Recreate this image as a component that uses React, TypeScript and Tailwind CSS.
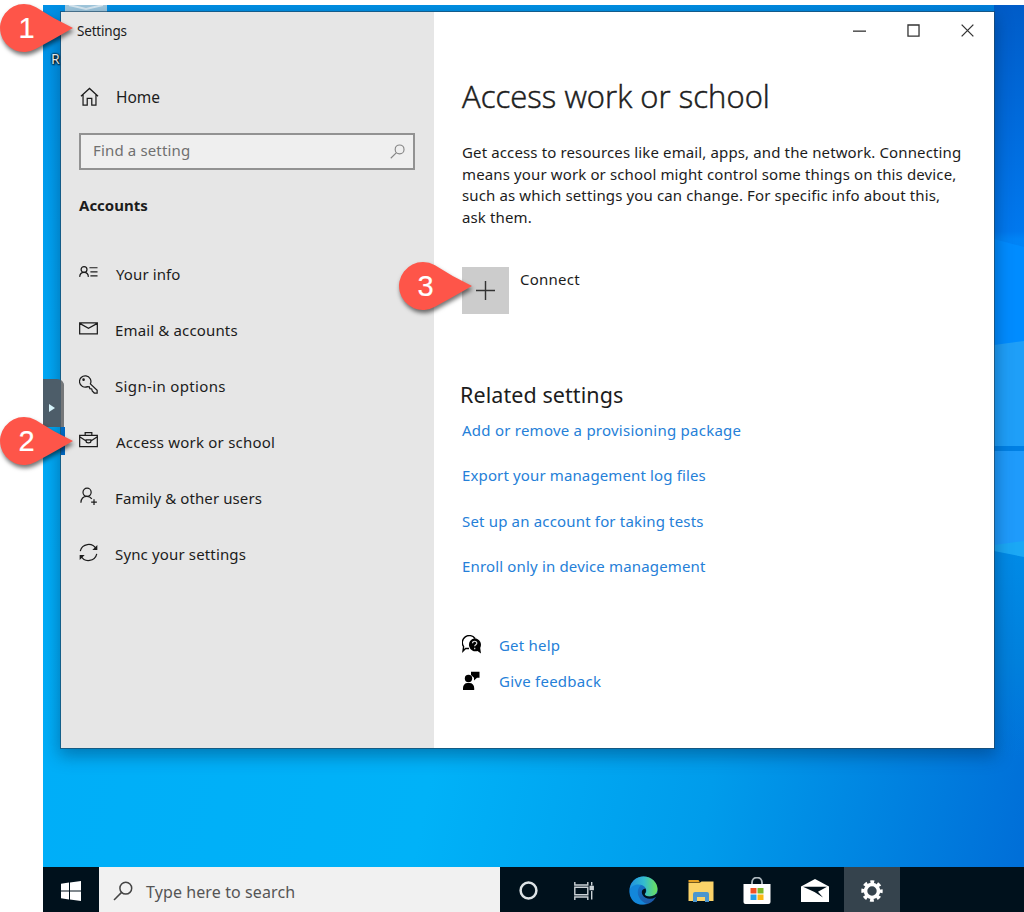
import type { ReactNode } from 'react'

function Line({ children, size = 20, width = 1.3, className = '' }: {
  children: ReactNode; size?: number; width?: number; className?: string
}) {
  return (
    <svg
      width={size} height={size} viewBox="0 0 20 20" fill="none" stroke="currentColor"
      strokeWidth={width} className={`shrink-0 ${className}`} aria-hidden="true"
    >
      {children}
    </svg>
  )
}

function SearchIcon({ size, className, width = 1.5 }: { size: number; className: string; width?: number }) {
  return (
    <Line size={size} className={className} width={width}>
      <circle cx="12.8" cy="7.2" r="5.9" />
      <path d="M8.6 11.4 1 19" />
    </Line>
  )
}

const navItems = [
  {
    label: 'Your info',
    track: 'tracking-[0.1px] pl-px',
    icon: (
      <>
        <circle cx="5.3" cy="6.8" r="3.1" />
        <path d="M.7 14.6c.2-3 2-4.7 4.6-4.7s4.4 1.7 4.6 4.7M11 5h8.5M12 9.3h7.5M12 13.6h7.5" />
      </>
    ),
  },
  {
    label: 'Email & accounts',
    track: 'tracking-[0.15px]',
    icon: (
      <path d="M.7 4h18.6v11.700H.7zM.7 4.6 10 9.7l9.3-5.1" />
    ),
  },
  {
    label: 'Sign-in options',
    track: 'tracking-[0.35px]',
    icon: (
      <>
        <path d="M12 9.300a6 6 0 1 0-3 3l1.900.2.5 1.900 2 .3.5 2 2.200 2.300h3v-2.900z" />
        <circle cx="4.800" cy="4.900" r=".7" fill="currentColor" />
      </>
    ),
  },
  {
    label: 'Access work or school',
    track: 'tracking-[0.22px] pl-px',
    active: true,
    icon: (
      <path d="M.7 4.500h18.600v12H.7zM6.500 4.500V1.700h7v2.800M.7 6l6.800 4.500M19.300 6l-6.800 4.500M7.500 9.300h5v1.500c0 1-1 1.700-2.500 1.700s-2.500-.7-2.500-1.700z" />
    ),
  },
  {
    label: 'Family & other users',
    track: 'tracking-[0.1px]',
    icon: (
      <>
        <circle cx="8.500" cy="5.600" r="4.300" />
        <path d="M2 16.500c.2-4 2.600-6.600 6.300-6.600 2.300 0 4 .9 5.200 2.500M15.800 13v6M12.800 16h6" />
      </>
    ),
  },
  {
    label: 'Sync your settings',
    track: 'tracking-[0.15px]',
    icon: (
      <>
        <path d="M1.300 8.500A9 9 0 0 1 18 6.300M18.700 11.500A9 9 0 0 1 2 13.700" />
        <path d="M19.300 2v5.300H14zM.7 18v-5.300H6z" fill="currentColor" stroke="none" />
      </>
    ),
  },
]

const links = [
  { label: 'Add or remove a provisioning package', track: 'tracking-[0.24px]' },
  { label: 'Export your management log files', track: 'tracking-[0.13px]' },
  { label: 'Set up an account for taking tests', track: 'tracking-[0.17px]' },
  { label: 'Enroll only in device management', track: 'tracking-[0.16px]' },
]

function Wallpaper() {
  return (
    <svg className="absolute inset-0" width="981" height="862" viewBox="43 5 981 862" preserveAspectRatio="none" aria-hidden="true">
      <defs>
        <linearGradient id="base" x1="43" y1="700" x2="1010" y2="900" gradientUnits="userSpaceOnUse">
          <stop offset="0" stopColor="#00aef8" />
          <stop offset=".4" stopColor="#00b2f8" />
          <stop offset=".68" stopColor="#009ceb" />
          <stop offset="1" stopColor="#006fd8" />
        </linearGradient>
        <linearGradient id="top" x1="0" y1="5" x2="0" y2="760" gradientUnits="userSpaceOnUse">
          <stop offset="0" stopColor="#0078d7" stopOpacity=".55" />
          <stop offset=".5" stopColor="#0090e8" stopOpacity=".2" />
          <stop offset="1" stopColor="#00a8f0" stopOpacity="0" />
        </linearGradient>
        <linearGradient id="side" x1="0" y1="5" x2="0" y2="760" gradientUnits="userSpaceOnUse">
          <stop offset="0" stopColor="#005cc8" />
          <stop offset=".3" stopColor="#0078ee" />
          <stop offset=".31" stopColor="#0083f6" />
          <stop offset=".43" stopColor="#0088fa" />
          <stop offset=".73" stopColor="#008ae6" />
          <stop offset=".87" stopColor="#0080dc" />
          <stop offset="1" stopColor="#0078dc" stopOpacity="0" />
        </linearGradient>
      </defs>
      <path fill="url(#base)" d="M43 5h981v862H43z" />
      <path fill="url(#top)" d="M43 5h981v755H43z" />
      <path fill="url(#side)" d="M994 5h30v755h-30z" />
      <path fill="#008cff" d="m994 239 30 8v96l-30 2z" />
      <path fill="#1f9ff8" d="m994 345 30-4v105h-30z" />
      <path fill="#0080e4" d="M994 446h30v5h-30z" />
      <path fill="#1f9bfb" d="M994 451h30v92l-30 3z" />
      <path fill="#1ba8f5" d="m994 545 30-4v16l-30-6z" />
    </svg>
  )
}

// Numbered teardrop pointing right
function Callout({ n, className }: { n: number; className: string }) {
  return (
    <div className={`absolute h-[50px] w-[76px] ${className}`}>
      <svg width="76" height="50" viewBox="0 0 76 50" className="absolute inset-0 overflow-visible drop-shadow-[1px_3px_2px_rgba(0,0,0,0.55)]" aria-hidden="true">
        <path fill="#fe5549" d="M24 0a24 24 0 0 1 12 3.200Q54 15 73 24 54 35 36 44.800A24 24 0 1 1 24 0Z" />
      </svg>
      <span className="absolute left-0 top-0 w-[53px] text-center font-['Liberation_Sans',sans-serif] text-[29px] leading-[48px] text-white [-webkit-text-stroke:0.2px_white]">{n}</span>
    </div>
  )
}

function Sidebar() {
  return (
    <aside className="w-[373px] shrink-0 bg-[#e6e6e6]">
      <div className="ml-4 mt-[9px] h-5 text-[13.5px] leading-5 tracking-[-0.2px]">Settings</div>
      <div className="ml-[19px] mt-[45px] flex h-6 items-center">
        <Line size={19} className="mt-[-3px]">
          <path d="M1 9.700 10 1.500l9 8.200M3.200 8v11h4.400v-7h4.800v7h4.400V8" />
        </Line>
        <span className="ml-[17px] text-[15.5px]">Home</span>
      </div>
      <div className="ml-[18px] mt-[23px] flex h-[37px] w-[336px] items-center justify-between border-2 border-[#929292] bg-[#efefef] pl-3 pr-2 text-[#707070]">
        <span className="pb-[2px] text-[15px] tracking-[0.15px]">Find a setting</span>
        <SearchIcon size={15} className="text-[#858585]" />
      </div>
      <div className="ml-[18px] mt-[23px] h-6 text-[15px] font-bold leading-6">Accounts</div>
      <nav className="mt-[28px]">
        {navItems.map(item => (
          <div key={item.label} className="relative flex h-14 items-center pl-[18px] pt-[2px]">
            {item.active && <span className="absolute left-0 top-[14px] h-7 w-1 bg-[#0067c0]" />}
            <Line size={19} className="mt-[-3px]">{item.icon}</Line>
            <span className={`ml-[17px] text-[15px] ${item.track}`}>{item.label}</span>
          </div>
        ))}
      </nav>
    </aside>
  )
}

function WindowButtons() {
  return (
    <div className="flex h-[38px] justify-end gap-[41px] pr-5 pt-3 text-[#333]">
      <Line size={13} width={2}><path d="M0 11h20" /></Line>
      <Line size={13} width={2}><path d="M1.500 1.500h17v17h-17z" /></Line>
      <Line size={13} width={2}><path d="m1 1 18 18M19 1 1 19" /></Line>
    </div>
  )
}

function SettingsWindow() {
  return (
    <div className="absolute left-[18px] top-[7px] flex h-[736px] w-[933px] bg-white shadow-[0_0_0_1px_rgba(30,70,100,0.65),0_6px_16px_2px_rgba(0,40,80,0.4)]">
      <Sidebar />
      <main className="min-w-0 flex-1">
        <WindowButtons />
        <div className="pl-7">
          <h1 className="mt-[22px] h-12 whitespace-nowrap font-['Open_Sans','Noto_Sans',sans-serif] text-[31px] font-light leading-[48px] tracking-[0.05px] [-webkit-text-stroke:0.5px_#1c1c1c]">Access work or school</h1>
          <p className="mt-[22px] whitespace-nowrap text-[15px] leading-[21.5px] tracking-[0.13px]">
            Get access to resources like email, apps, and the network. Connecting<br />
            means your work or school might control some things on this device,<br />
            such as which settings you can change. For specific info about this,<br />
            ask them.
          </p>
          <div className="mt-[39px] flex">
            <div className="grid h-[47px] w-[47px] place-items-center bg-[#cccccc] text-[#333]">
              <Line size={19} width={1.5}><path d="M0 10h20M10 0v20" /></Line>
            </div>
            <span className="ml-[11px] text-[15px] leading-6 tracking-[0.25px]">Connect</span>
          </div>
          <h2 className="ml-[-2px] mt-[65px] h-8 text-[21.5px] leading-8 tracking-[0.08px]">Related settings</h2>
          <ul className="mt-[7px] text-[15px] text-[#2580d8]">
            {links.map(l => (
              <li key={l.label} className={`mb-[21.4px] h-6 whitespace-nowrap leading-6 ${l.track}`}>{l.label}</li>
            ))}
          </ul>
          <div className="mt-[55px] flex h-6 items-center text-[#2580d8]">
            <svg width="20" height="20" viewBox="0 0 20 20" className="text-black" aria-hidden="true">
              <path d="M7 13.500H3.600L1 16l.6-4.400A6.500 6.500 0 1 1 13 3.500" fill="none" stroke="currentColor" strokeWidth="1.4" />
              <path d="M12.500 3.300a6.500 6.500 0 0 1 5.700 9.600l.8 5.600-3.500-2.600a6.500 6.500 0 1 1-3-12.600Z" fill="currentColor" />
              <path d="M10.500 8.300c0-2.800 4.300-2.600 4.300 0 0 1.500-2.100 1.600-2.100 3M12.700 12.700v1.500" fill="none" stroke="#ddd" strokeWidth="1.2" />
            </svg>
            <span className="ml-[17px] text-[15px] tracking-[0.2px]">Get help</span>
          </div>
          <div className="mt-3 flex h-6 items-center text-[#2580d8]">
            <svg width="20" height="20" viewBox="0 0 20 20" className="text-black" aria-hidden="true">
              <circle cx="6.500" cy="7.500" r="3.700" />
              <path d="M1 19v-2C1 14 3 12 5.500 12h2c2.800 0 4.700 2 4.700 5v2zM9 .8h8.500v6H15L12 9.500V6.800L9 4z" />
            </svg>
            <span className="ml-[17px] text-[15px] tracking-[0.25px]">Give feedback</span>
          </div>
        </div>
      </main>
    </div>
  )
}

function EdgeIcon() {
  return (
    <svg width="29" height="29" viewBox="0 0 29 29" aria-hidden="true">
      <defs>
        <linearGradient id="edgeTop" x1="2" y1="12" x2="28" y2="12" gradientUnits="userSpaceOnUse">
          <stop offset="0" stopColor="#2295dd" />
          <stop offset=".5" stopColor="#34bcd0" />
          <stop offset="1" stopColor="#6be05c" />
        </linearGradient>
        <linearGradient id="edgeBody" x1="3" y1="8" x2="18" y2="28" gradientUnits="userSpaceOnUse">
          <stop offset="0" stopColor="#1479d0" />
          <stop offset="1" stopColor="#1c5aa8" />
        </linearGradient>
      </defs>
      <circle cx="14.500" cy="14.500" r="14" fill="url(#edgeBody)" />
      <path fill="#1387da" d="M.6 15C2 8 8 6.500 13 8.500c-4 2-5.500 8-3 12.500 2 4 5 6 8 6.800C9 31 0 24.500.6 15Z" />
      <path fill="url(#edgeTop)" d="M.6 14C1.500 5.500 7.500.5 14.500.5c8 0 14 6 14 12.500 0 5-4 7.500-8 7.500-3.500 0-5.500-1.200-4.700-2.500 1.700-1.600 2-3.500 1-5.500C14.500 7.500 4 6.500.6 14Z" />
      <path fill="#00111c" d="M16.400 12.500c-3 .3-4.500 3-3 6 2.500 4.600 8 5.500 13 2.800l3-1.500V17l-2.500 1c-2 1.800-4 2.400-6.500 2.400-3.300 0-5.300-1.200-4.400-2.800 1.200-1.600 1.200-3.500.4-5.100Z" />
    </svg>
  )
}

function Taskbar() {
  return (
    <div className="flex h-[45px] items-stretch bg-[#00111c]">
      <div className="grid w-14 place-items-center pt-[2px]">
        <svg width="20" height="20" viewBox="0 0 20 20" fill="#fff" aria-hidden="true">
          <path d="M0 2.700 8 1.500V9.500H0zM9 1.400 20 0v9.500H9zM0 10.500h8v8L0 17.300zM9 10.500h11V20L9 18.600z" />
        </svg>
      </div>
      <div className="flex w-[401px] items-center bg-[#f1f1f1] pl-[14px] pt-[2px]">
        <SearchIcon size={20} className="text-[#444]" />
        <span className="ml-[13px] pt-[2px] text-[16px] tracking-[0.1px] text-[#555]">Type here to search</span>
      </div>
      <div className="grid w-14 place-items-center pt-[2px]">
        <svg width="19" height="19" viewBox="0 0 19 19" aria-hidden="true"><circle cx="9.500" cy="9.500" r="7.900" fill="none" stroke="#dde3e6" strokeWidth="2.5" /></svg>
      </div>
      <div className="grid w-14 place-items-center pt-[2px]">
        <Line size={20} className="text-[#cbd2d6]" width={1.4}>
          <path d="M.8 1v3h13V1M.8 19v-3h13v3M.8 6.200h13v7.600H.8zM17.700 1v3.500M17.700 10v8.500" />
          <path d="M16.200 5.500h3v3h-3z" fill="currentColor" />
        </Line>
      </div>
      <div className="grid w-[62px] place-items-center pt-[2px]"><EdgeIcon /></div>
      <div className="grid w-[53px] place-items-center pt-[2px]">
        <svg width="26" height="22" viewBox="0 0 26 22" aria-hidden="true">
          <path fill="#e5a225" d="M.5 0h10l1.500 2.500H.5z" />
          <path fill="#fbd369" d="M.5 3h11l2-1.500h12V21H.5z" />
          <path fill="#4c96ce" d="M5 22v-8q0-2 2-2h12q2 0 2 2v8h-4v-5H9v5z" />
        </svg>
      </div>
      <div className="grid w-[60px] place-items-center pt-[2px]">
        <svg width="28" height="28" viewBox="0 0 28 28" aria-hidden="true">
          <path d="M9 8V5.500a5 5 0 0 1 10 0V8" fill="none" stroke="#aeb9bf" strokeWidth="1.8" />
          <path fill="#fff" d="M.5 7h27v18q0 2-2 2h-23q-2 0-2-2z" />
          <path fill="#f05024" d="M7.500 11h6v5.500h-6z" />
          <path fill="#7db928" d="M14.500 11h6v5.500h-6z" />
          <path fill="#24a0e8" d="M7.500 17.500h6V23h-6z" />
          <path fill="#fab813" d="M14.500 17.500h6V23h-6z" />
        </svg>
      </div>
      <div className="grid w-[57px] place-items-center pr-px pt-[2px]">
        <svg width="28" height="23" viewBox="0 0 28 23" aria-hidden="true">
          <path fill="#fff" d="M0 7.500 14 0l14 7.500V23H0z" />
          <path fill="#00111c" d="M2 7.700h24l-9 5 5 5.800-8.500-5.500z" />
        </svg>
      </div>
      <div className="grid w-14 place-items-center bg-[#35434d] pt-[2px]">
        <svg width="22" height="22" viewBox="0 0 22 22" fill="none" stroke="#fff" aria-hidden="true">
          <circle cx="11" cy="11" r="6.500" strokeWidth="3.6" />
          <circle cx="11" cy="11" r="9" strokeWidth="3.4" strokeDasharray="3.8 3.268" strokeDashoffset="1.9" />
        </svg>
      </div>
    </div>
  )
}

export default function App() {
  return (
    <div className="relative h-[912px] w-[1024px] overflow-hidden bg-white pl-[43px] pt-[5px] font-['Noto_Sans','Open_Sans',sans-serif] text-[#1c1c1c]">
      <div className="relative h-[862px] overflow-hidden">
        <Wallpaper />
        {/* desktop shortcut mostly hidden behind the window */}
        <div className="absolute left-[22px] top-0 h-2 w-[42px] bg-[#a4cbe0]">
          <svg width="42" height="8" aria-hidden="true"><path d="M4 0l17 4L38 0" fill="none" stroke="#ddecf4" strokeWidth="2" /></svg>
        </div>
        <span className="absolute left-[8px] top-[43px] text-[14px] text-white [text-shadow:1px_1px_2px_#000,0_0_2px_#000,0_0_2px_#000]">R</span>
        <SettingsWindow />
        <div className="absolute left-0 top-[374px] flex h-[48px] w-[21px] items-center overflow-hidden rounded-tr-[7px] bg-[#4d5d69] pl-[6px] pt-[10px]">
          <div className="absolute inset-y-0 right-0 w-[3px] bg-[#757779]" />
          <svg width="6" height="8" viewBox="0 0 6 8" aria-hidden="true"><path fill="#d6f4fb" d="M0 0l6 4-6 4z" /></svg>
        </div>
      </div>
      <Taskbar />
      <Callout n={1} className="left-0 top-[4px]" />
      <Callout n={2} className="left-0 top-[417px]" />
      <Callout n={3} className="left-[399px] top-[262px]" />
    </div>
  )
}
